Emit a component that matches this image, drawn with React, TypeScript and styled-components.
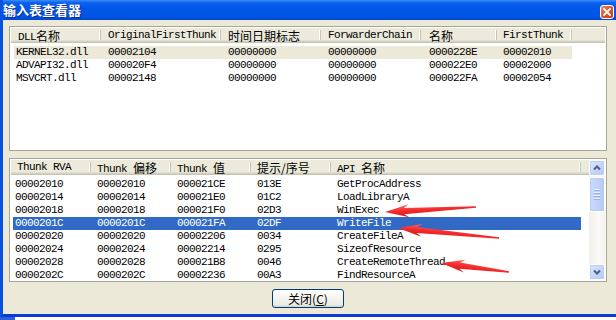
import React from "react";
import styled, { createGlobalStyle } from "styled-components";

const MONO = `"Liberation Mono", "Noto Sans CJK SC", monospace`;
const CJKF = `"Noto Sans CJK SC", "Liberation Sans", sans-serif`;

const Global = createGlobalStyle`
  html, body { margin: 0; padding: 0; overflow: hidden; background: #ffffff; }
  #root { width: 616px; height: 320px; }
`;

const Page = styled.div`
  position: relative;
  width: 616px;
  height: 320px;
  overflow: hidden;
  display: flex;
  flex-direction: column;
`;

const Window = styled.div`
  height: 317px;
  box-sizing: border-box;
  display: flex;
  flex-direction: column;
  border-left: 3px solid #0a52e2;
  border-bottom: 3px solid #0a3bd6;
`;

const TitleBar = styled.div`
  height: 20px;
  flex: none;
  display: flex;
  align-items: center;
  justify-content: space-between;
  padding-right: 2px;
  background: linear-gradient(180deg, #3a8cf8 0%, #0b60ec 14%, #0056e6 45%, #0054e2 85%, #0047cc 100%);
`;

const Title = styled.span`
  font: bold 13px/20px ${CJKF};
  color: #ffffff;
  text-shadow: 1px 1px 0 #0b2a96;
  white-space: nowrap;
`;

const CloseBtn = styled.div`
  width: 14px;
  height: 14px;
  box-sizing: border-box;
  border: 1px solid #ffffff;
  border-radius: 3px;
  background: linear-gradient(135deg, #ef8a6a 0%, #e0532d 50%, #c9401d 100%);
  display: flex;
  align-items: center;
  justify-content: center;
  margin-top: 3px;
`;

const Body = styled.div`
  flex: 1;
  background: #ece9d8;
  padding: 6px 0 0 6px;
  display: flex;
  flex-direction: column;
`;

const ListBox = styled.div<{ $h: number; $gap: number }>`
  width: 598px;
  height: ${(p) => p.$h}px;
  margin-bottom: ${(p) => p.$gap}px;
  box-sizing: border-box;
  border: 1px solid #a7a596;
  padding: 1px;
  background: #ffffff;
  display: flex;
  overflow: hidden;
`;

const ListMain = styled.div`
  flex: 1;
  min-width: 0;
  display: flex;
  flex-direction: column;
  overflow: hidden;
`;

const Header = styled.div`
  display: flex;
  height: 15px;
  flex: none;
  background: #ebeadb;
  box-shadow: inset 0 -1px 0 #c5c2b2, inset 0 -2px 0 #d6d3c5, inset 0 -3px 0 #e2dfd1;
`;

const HeadCell = styled.div<{ $w?: number; $pad: number; $fill?: boolean }>`
  position: relative;
  box-sizing: border-box;
  ${(p) => (p.$fill ? "flex: 1;" : `flex: none; width: ${p.$w}px;`)}
  padding-left: ${(p) => p.$pad}px;
  font: 11px/15px ${MONO};
  letter-spacing: -0.6px;
  color: #000000;
  white-space: nowrap;
  overflow: hidden;
  &::after {
    content: "";
    display: ${(p) => (p.$fill ? "none" : "block")};
    position: absolute;
    right: 0;
    top: 2px;
    bottom: 3px;
    width: 1px;
    background: #c7c4b4;
    box-shadow: -1px 0 0 #ffffff;
  }
`;

const Cjk = styled.span`
  font-family: ${CJKF};
  font-size: 12px;
  letter-spacing: 0;
  vertical-align: -1px;
`;

const Rows = styled.div`
  padding-top: 3px;
  overflow: hidden;
  flex: 1;
`;

const Row = styled.div<{ $indent: number; $sel?: "focus" | "blur" }>`
  display: flex;
  height: 13px;
  width: fit-content;
  margin-left: ${(p) => p.$indent}px;
  background: ${(p) => (p.$sel === "focus" ? "#316ac5" : p.$sel === "blur" ? "#ece9d8" : "transparent")};
  color: ${(p) => (p.$sel === "focus" ? "#ffffff" : "#000000")};
`;

const Cell = styled.div<{ $w: number; $pad: number }>`
  flex: none;
  box-sizing: border-box;
  width: ${(p) => p.$w}px;
  padding-left: ${(p) => p.$pad}px;
  font: 11px/13px ${MONO};
  letter-spacing: -0.6px;
  white-space: nowrap;
  overflow: hidden;
`;

const ScrollBar = styled.div`
  width: 16px;
  flex: none;
  display: flex;
  flex-direction: column;
  background: linear-gradient(90deg, #f1efe8 0%, #fbfaf6 60%, #f4f2ec 100%);
`;

const ScrollBtn = styled.div`
  height: 16px;
  flex: none;
  box-sizing: border-box;
  border: 1px solid #ffffff;
  border-radius: 2px;
  background: linear-gradient(135deg, #dde8fd 0%, #c3d5fb 55%, #b3c9f6 100%);
  box-shadow: inset 0 0 0 1px #bccef4;
  display: flex;
  align-items: center;
  justify-content: center;
`;

const Track = styled.div`
  flex: 1;
  display: flex;
  flex-direction: column;
  padding-top: 1px;
`;

const Thumb = styled.div`
  height: 35px;
  box-sizing: border-box;
  border: 1px solid #ffffff;
  border-radius: 2px;
  background: linear-gradient(90deg, #c9d8fc 0%, #bfd1fb 60%, #b2c7f5 100%);
  box-shadow: inset 0 0 0 1px #b8cbf3;
  display: flex;
  flex-direction: column;
  align-items: center;
  justify-content: center;
  gap: 1px;
`;

const Grip = styled.div`
  width: 6px;
  height: 1px;
  background: #eef4ff;
  box-shadow: 0 1px 0 #8eaef0;
  margin-bottom: 1px;
`;

const ButtonRow = styled.div`
  width: 598px;
  display: flex;
  justify-content: center;
`;

const Button = styled.button`
  width: 72px;
  height: 19px;
  box-sizing: border-box;
  padding: 0;
  border: 1px solid #003c74;
  border-radius: 3px;
  background: linear-gradient(180deg, #ffffff 0%, #f4f3ee 50%, #ecebe5 85%, #d6d0c5 100%);
  font: 12px/17px ${CJKF};
  color: #000000;
`;

const Behind = styled.div`
  flex: 1;
  display: flex;
  background: #ffffff;
`;

const BehindBlue = styled.div`
  width: 15px;
  background: #2c5fd8;
`;

const Overlay = styled.svg`
  position: absolute;
  left: 0;
  top: 0;
  pointer-events: none;
`;

type Col = { w: number; hp: number; dp: number; label: React.ReactNode };

const topCols: Col[] = [
  { w: 90, hp: 7, dp: 2, label: <>DLL<Cjk>名称</Cjk></> },
  { w: 120, hp: 7, dp: 7, label: "OriginalFirstThunk" },
  { w: 100, hp: 7, dp: 7, label: <Cjk>时间日期标志</Cjk> },
  { w: 100, hp: 7, dp: 7, label: "ForwarderChain" },
  { w: 76, hp: 8, dp: 8, label: <Cjk>名称</Cjk> },
  { w: 75, hp: 6, dp: 6, label: "FirstThunk" },
];

const topRows = [
  ["KERNEL32.dll", "00002104", "00000000", "00000000", "0000228E", "00002010"],
  ["ADVAPI32.dll", "000020F4", "00000000", "00000000", "000022E0", "00002000"],
  ["MSVCRT.dll", "00002148", "00000000", "00000000", "000022FA", "00002054"],
];

const botCols: Col[] = [
  { w: 80, hp: 6, dp: 2, label: "Thunk RVA" },
  { w: 80, hp: 6, dp: 6, label: <>Thunk <Cjk>偏移</Cjk></> },
  { w: 80, hp: 6, dp: 6, label: <>Thunk <Cjk>值</Cjk></> },
  { w: 80, hp: 6, dp: 6, label: <Cjk>提示/序号</Cjk> },
  { w: 250, hp: 6, dp: 6, label: <>API <Cjk>名称</Cjk></> },
];

const botRows = [
  ["00002010", "00002010", "000021CE", "013E", "GetProcAddress"],
  ["00002014", "00002014", "000021E0", "01C2", "LoadLibraryA"],
  ["00002018", "00002018", "000021F0", "02D3", "WinExec"],
  ["0000201C", "0000201C", "000021FA", "02DF", "WriteFile"],
  ["00002020", "00002020", "00002206", "0034", "CreateFileA"],
  ["00002024", "00002024", "00002214", "0295", "SizeofResource"],
  ["00002028", "00002028", "000021B8", "0046", "CreateRemoteThread"],
  ["0000202C", "0000202C", "00002236", "00A3", "FindResourceA"],
];

const arrows = [
  { tx: 385, ty: 212, ex: 476, ey: 207 },
  { tx: 398, ty: 228, ex: 499, ey: 238 },
  { tx: 441, ty: 263, ex: 509, ey: 272 },
];

function Arrow({ tx, ty, ex, ey }: { tx: number; ty: number; ex: number; ey: number }) {
  const L = Math.hypot(ex - tx, ey - ty);
  const a = (Math.atan2(ey - ty, ex - tx) * 180) / Math.PI;
  const pts = `0,0 24,-6.5 19,-3 ${L},-0.8 ${L},0.8 19,3.2 24,6.5`;
  return (
    <g transform={`translate(${tx} ${ty}) rotate(${a})`}>
      <polygon points={pts} fill="url(#arrowGrad)" />
    </g>
  );
}

function DataList({ cols, rows, indent, sel, selMode }: {
  cols: Col[];
  rows: string[][];
  indent: number;
  sel: number;
  selMode: "focus" | "blur";
}) {
  return (
    <ListMain>
      <Header>
        {cols.map((c, i) => (
          <HeadCell key={i} $w={c.w} $pad={c.hp}>
            {c.label}
          </HeadCell>
        ))}
        <HeadCell $pad={0} $fill />
      </Header>
      <Rows>
        {rows.map((r, ri) => (
          <Row key={ri} $indent={indent} $sel={ri === sel ? selMode : undefined}>
            {r.map((v, ci) => (
              <Cell key={ci} $w={ci === 0 ? cols[ci].w - indent : cols[ci].w} $pad={cols[ci].dp}>
                {v}
              </Cell>
            ))}
          </Row>
        ))}
      </Rows>
    </ListMain>
  );
}

export default function App() {
  return (
    <Page>
      <Global />
      <Window>
        <TitleBar>
          <Title>输入表查看器</Title>
          <CloseBtn>
            <svg width="8" height="8" viewBox="0 0 8 8">
              <path d="M1 1 L7 7 M7 1 L1 7" stroke="#ffffff" strokeWidth="1.8" strokeLinecap="square" />
            </svg>
          </CloseBtn>
        </TitleBar>
        <Body>
          <ListBox $h={125} $gap={7}>
            <DataList cols={topCols} rows={topRows} indent={3} sel={0} selMode="blur" />
          </ListBox>
          <ListBox $h={124} $gap={7}>
            <DataList cols={botCols} rows={botRows} indent={2} sel={3} selMode="focus" />
            <ScrollBar>
              <ScrollBtn>
                <svg width="8" height="6" viewBox="0 0 8 6">
                  <polyline points="1,4.5 4,1.5 7,4.5" fill="none" stroke="#4d6185" strokeWidth="2" />
                </svg>
              </ScrollBtn>
              <Track>
                <Thumb>
                  <Grip />
                  <Grip />
                  <Grip />
                  <Grip />
                </Thumb>
              </Track>
              <ScrollBtn>
                <svg width="8" height="6" viewBox="0 0 8 6">
                  <polyline points="1,1.5 4,4.5 7,1.5" fill="none" stroke="#4d6185" strokeWidth="2" />
                </svg>
              </ScrollBtn>
            </ScrollBar>
          </ListBox>
          <ButtonRow>
            <Button>
              关闭(<u>C</u>)
            </Button>
          </ButtonRow>
        </Body>
      </Window>
      <Behind>
        <BehindBlue />
      </Behind>
      <Overlay width="616" height="320" viewBox="0 0 616 320">
        <defs>
          <linearGradient id="arrowGrad" x1="0" y1="-6" x2="0" y2="6" gradientUnits="userSpaceOnUse">
            <stop offset="0" stopColor="#ff6060" />
            <stop offset="0.5" stopColor="#f42a2a" />
            <stop offset="1" stopColor="#d81818" />
          </linearGradient>
        </defs>
        {arrows.map((a, i) => (
          <Arrow key={i} {...a} />
        ))}
      </Overlay>
    </Page>
  );
}
